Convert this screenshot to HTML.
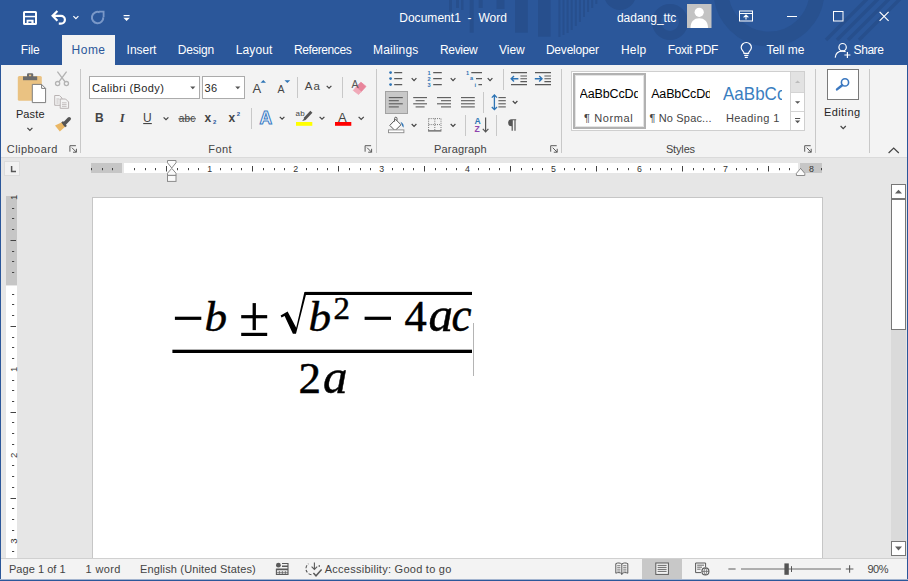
<!DOCTYPE html>
<html>
<head>
<meta charset="utf-8">
<title>Document1 - Word</title>
<style>
html,body{margin:0;padding:0;}
body{width:908px;height:581px;overflow:hidden;position:relative;background:#e6e6e6;font-family:"Liberation Sans",sans-serif;font-size:11px;color:#262626;}
.abs{position:absolute;}
.t{position:absolute;white-space:pre;line-height:1;}
#title{left:0;top:0;width:908px;height:65px;background:#2b579a;}
#hometab{left:62px;top:35px;width:53px;height:31px;background:#f3f3f3;}
#ribbon{left:1px;top:65px;width:906px;height:92px;background:#f3f3f3;}
#ribline{left:1px;top:157px;width:906px;height:1px;background:#dadada;}
#page{left:92px;top:197px;width:729px;height:361px;background:#fff;border:1px solid #c6c6c6;border-bottom:none;}
#status{left:1px;top:559px;width:906px;height:21px;background:#f3f3f3;}
#statline{left:1px;top:558px;width:906px;height:1px;background:#d0d0d0;}
#bl{left:0;top:65px;width:1px;height:516px;background:#2b579a;}
#br{left:907px;top:65px;width:1px;height:516px;background:#2b579a;}
#bb{left:0;top:579px;width:908px;height:2px;background:linear-gradient(#a3b4cf 0,#a3b4cf 50%,#2b579a 50%,#2b579a 100%);}
.sep{position:absolute;width:1px;background:#c8c8c8;}
.box{position:absolute;box-sizing:border-box;background:#fff;border:1px solid #ababab;}
.hr{position:absolute;background:#c6c6c6;}
.hw{position:absolute;background:#fff;}
#overlay{position:absolute;left:0;top:0;width:908px;height:581px;}
.gal{position:absolute;overflow:hidden;white-space:pre;line-height:1;}
</style>
</head>
<body>
<div id="title" class="abs"></div>
<div id="hometab" class="abs"></div>
<div id="ribbon" class="abs"></div>
<div id="ribline" class="abs"></div>

<!-- ribbon group separators -->
<div class="sep" style="left:80px;top:69px;height:84px;"></div>
<div class="sep" style="left:376px;top:69px;height:84px;"></div>
<div class="sep" style="left:561px;top:69px;height:84px;"></div>
<div class="sep" style="left:815px;top:69px;height:84px;"></div>
<div class="sep" style="left:869px;top:69px;height:84px;"></div>
<!-- small separators -->
<div class="sep" style="left:297px;top:77px;height:21px;"></div>
<div class="sep" style="left:342px;top:77px;height:21px;"></div>
<div class="sep" style="left:251px;top:108px;height:21px;"></div>
<div class="sep" style="left:503px;top:69px;height:21px;"></div>
<div class="sep" style="left:483px;top:92px;height:21px;"></div>
<div class="sep" style="left:465px;top:115px;height:21px;"></div>
<div class="sep" style="left:496px;top:115px;height:21px;"></div>

<!-- font boxes -->
<div class="box" style="left:89px;top:76px;width:111px;height:23px;"></div>
<div class="box" style="left:202px;top:76px;width:43px;height:23px;"></div>
<!-- align-left selected -->
<div class="abs" style="left:385px;top:91px;width:23px;height:23px;box-sizing:border-box;background:#c8c8c8;border:1px solid #a2a2a2;"></div>
<!-- styles gallery -->
<div class="box" style="left:571px;top:71px;width:234px;height:60px;border-color:#cfcfcf;"></div>
<div class="abs" style="left:573px;top:73px;width:73px;height:56px;box-sizing:border-box;border:2px solid #b2b2b2;box-shadow:inset 0 0 0 1px #e4e4e4;background:#fff;"></div>
<div class="abs" style="left:790px;top:72px;width:13px;height:20px;background:#e2e2e2;border-left:1px solid #d4d4d4;border-bottom:1px solid #d4d4d4;"></div>
<div class="abs" style="left:790px;top:93px;width:13px;height:18px;background:#fff;border-left:1px solid #d4d4d4;border-bottom:1px solid #d4d4d4;"></div>
<div class="abs" style="left:790px;top:112px;width:13px;height:18px;background:#fff;border-left:1px solid #d4d4d4;"></div>
<div class="gal" style="left:579.6px;top:88px;width:58.6px;height:15px;font-size:12.5px;color:#000;letter-spacing:-0.15px;">AaBbCcDd</div>
<div class="gal" style="left:651.2px;top:88px;width:58.6px;height:15px;font-size:12.5px;color:#000;letter-spacing:-0.15px;">AaBbCcDd</div>
<div class="gal" style="left:723px;top:84.2px;width:65.6px;height:22px;font-size:19px;color:#3a7ebf;transform:scaleX(0.895);transform-origin:0 0;">AaBbCc</div>
<!-- editing button -->
<div class="box" style="left:827px;top:69px;width:32px;height:31px;border-color:#7a7a7a;"></div>

<!-- horizontal ruler -->
<div class="hr" style="left:91px;top:163px;width:31px;height:10px;"></div>
<div class="hw" style="left:124px;top:163px;width:674px;height:10px;"></div>
<div class="hr" style="left:800px;top:163px;width:22px;height:10px;"></div>
<!-- vertical ruler -->
<div class="hr" style="left:6px;top:196px;width:11px;height:89px;"></div>
<div class="hw" style="left:6px;top:286px;width:11px;height:272px;"></div>

<div id="page" class="abs"></div>

<!-- scrollbar -->
<div class="abs" style="left:891px;top:184px;width:15px;height:372px;background:#dadada;"></div>
<div class="box" style="left:891px;top:184px;width:15px;height:15px;border-color:#777;"></div>
<div class="box" style="left:891px;top:199px;width:15px;height:131px;border-color:#777;"></div>
<div class="box" style="left:891px;top:541px;width:15px;height:15px;border-color:#777;"></div>

<div id="statline" class="abs"></div>
<div id="status" class="abs"></div>
<div class="abs" style="left:642px;top:559px;width:40px;height:21px;background:#c8c8c8;"></div>
<div id="bl" class="abs"></div><div id="br" class="abs"></div><div id="bb" class="abs"></div>

<svg class="abs" style="position:absolute;left:0;top:0" width="908" height="581" viewBox="0 0 908 581" font-family="'Liberation Serif', serif" fill="#000">
<rect x="172.4" y="349.7" width="299.6" height="3.3"/>
<rect x="305" y="291.9" width="167" height="3.1"/>
<rect x="174.9" y="316.7" width="26.4" height="3.2"/>
<rect x="364.6" y="316.7" width="26.4" height="3.2"/>
<rect x="241.2" y="315.1" width="26" height="3.2"/>
<rect x="252.6" y="303.1" width="3.3" height="27"/>
<rect x="241.2" y="332.8" width="26" height="3.2"/>
<path d="M280.6,315.4 L287.6,311.6 L296.2,327.8 L304.4,291.9 L306.8,291.9 L306.8,295 L305.9,295 L296,333.7 L292.9,333.7 L284.6,316 L281.5,317.6 Z"/>
<text transform="translate(204.6,331) scale(0.96,0.895)" font-size="47" font-style="italic" stroke="#000" stroke-width="0.5">b</text>
<text transform="translate(308.6,331) scale(0.96,0.895)" font-size="47" font-style="italic" stroke="#000" stroke-width="0.5">b</text>
<text transform="translate(333.4,318.9) scale(1.06,1)" font-size="31" stroke="#000" stroke-width="0.5">2</text>
<text transform="translate(404.4,331) scale(1,1)" font-size="44.5" stroke="#000" stroke-width="0.5">4</text>
<text transform="translate(428.6,331) scale(1.03,1)" font-size="47.5" font-style="italic" stroke="#000" stroke-width="0.5">a</text>
<text transform="translate(451.4,331) scale(0.92,1)" font-size="49" font-style="italic" stroke="#000" stroke-width="0.5">c</text>
<text transform="translate(298.4,393.1) scale(1,1)" font-size="45" stroke="#000" stroke-width="0.5">2</text>
<text transform="translate(323,393.1) scale(1.03,1)" font-size="47.5" font-style="italic" stroke="#000" stroke-width="0.5">a</text>
<rect x="473" y="323" width="1" height="53" fill="#b4b4b4"/>
</svg>
<svg id="overlay" width="908" height="581" viewBox="0 0 908 581" font-family="'Liberation Sans', sans-serif">
<g fill="#274f8d">
<rect x="449" y="0" width="3" height="12"/>
<rect x="456" y="0" width="3" height="8"/>
<rect x="461" y="0" width="2.5" height="10"/>
<rect x="469.7" y="0" width="4" height="32.7"/>
<rect x="478.7" y="0" width="4" height="8"/>
<rect x="496.5" y="0" width="8" height="9"/>
<rect x="515" y="0" width="12.8" height="32.7"/>
<rect x="538" y="0" width="12.6" height="36.7"/>
<rect x="558.4" y="0" width="2" height="37"/>
<rect x="562.5" y="0" width="2" height="35"/>
<rect x="566.6" y="0" width="2" height="33"/>
<rect x="570.7" y="0" width="2" height="30"/>
<rect x="574.8" y="0" width="2" height="26"/>
<rect x="578.9" y="0" width="2" height="22"/>
<rect x="583" y="0" width="2" height="17"/>
<rect x="587.1" y="0" width="2" height="12"/>
<rect x="591.2" y="0" width="2" height="8"/>
<rect x="595.3" y="0" width="2" height="4"/>
<circle cx="620" cy="-6" r="16"/>
</g>
<defs>
<clipPath id="tclip"><rect x="0" y="0" width="908" height="64"/></clipPath>
</defs>
<g fill="none" clip-path="url(#tclip)">
<circle cx="769" cy="-9" r="48" stroke="#28518f" stroke-width="15"/>
<circle cx="670" cy="22" r="13.5" stroke="#274f8d" stroke-width="9"/>
<path d="M826,40 L868,-2" stroke="#274f8d" stroke-width="3.4"/>
<path d="M837,40 L879,-2" stroke="#274f8d" stroke-width="3.4"/>
<path d="M848,40 L890,-2" stroke="#274f8d" stroke-width="3.4"/>
<path d="M859,40 L901,-2" stroke="#274f8d" stroke-width="3.4"/>
</g>
<rect x="62" y="35" width="53" height="30" fill="#f3f3f3"/>
<g fill="none" stroke="#fff" stroke-width="2">
<rect x="24" y="12" width="12" height="12" rx="0.6"/>
</g>
<rect x="24.6" y="15.8" width="10.8" height="1.5" fill="#fff"/>
<path d="M26.6,19.8 H33.6 V24.4 H31.4 V21.4 H28.4 V24.4 H26.6 Z" fill="#fff"/>
<path d="M57.4,10.9 L52.6,15.8 L57.4,20.7 M53,15.8 H61 a3.9,3.9 0 0 1 0,7.8 H58.8" fill="none" stroke="#fff" stroke-width="2.2" stroke-linejoin="miter"/>
<path d="M73.4,16.1 L75.9,18.6 L78.4,16.1" fill="none" stroke="#fff" stroke-width="1.2"/>
<path d="M99.6,12.2 A5.7,5.7 0 1 0 103.3,17.2" fill="none" stroke="#7a98c8" stroke-width="2"/>
<path d="M99,11.6 H103.6 V17" fill="none" stroke="#7a98c8" stroke-width="1.8"/>
<rect x="123.6" y="15" width="6" height="1.2" fill="#fff"/><path d="M123.4,17.8 H129.8 L126.6,21 Z" fill="#fff"/>
<rect x="739.5" y="11" width="13" height="10" fill="none" stroke="#fff" stroke-width="1"/>
<path d="M739.5,13.5 H752.5" stroke="#fff" stroke-width="1" />
<path d="M746,19.5 V15.2 M743.6,17.4 L746,15 L748.4,17.4" fill="none" stroke="#fff" stroke-width="1.1"/>
<path d="M787,16.5 H797" stroke="#fff" stroke-width="1"/>
<rect x="833.5" y="11.5" width="9.5" height="9.5" fill="none" stroke="#fff" stroke-width="1"/>
<path d="M879.6,11.8 L888.6,20.8 M888.6,11.8 L879.6,20.8" stroke="#fff" stroke-width="1.2"/>
<rect x="687" y="4" width="24.5" height="24" fill="#c3c3c3"/>
<circle cx="699.2" cy="12.3" r="4.6" fill="#fff"/>
<path d="M690.5,28 C690.5,21.5 694,18.2 699.2,18.2 C704.4,18.2 708,21.5 708,28 Z" fill="#fff"/>
<g fill="none" stroke="#fff" stroke-width="1.2">
<path d="M744,53.3 C744,51 741.2,50.6 741.2,47.6 A5,5 0 0 1 751.4,47.6 C751.4,50.6 748.6,51 748.6,53.3 Z"/>
<path d="M744.2,55.3 H748.4 M744.8,57.3 H747.8"/>
</g>
<g fill="none" stroke="#fff" stroke-width="1.2">
<circle cx="842.6" cy="47.2" r="3.7"/>
<path d="M835.2,57.6 C835.6,53 838.6,51.2 842.6,51.2 C843.8,51.2 844.8,51.4 845.6,51.8"/>
<path d="M847.4,52 V58 M844.4,55 H850.4"/>
</g>
<rect x="17.8" y="76" width="24" height="24.7" rx="1.5" fill="#eac282"/>
<rect x="23" y="76.4" width="14.2" height="3.8" fill="#6b6b6b"/>
<rect x="27" y="73.2" width="6.2" height="4.4" rx="1.2" fill="#6b6b6b"/>
<rect x="29" y="74.6" width="2.2" height="1.6" fill="#eac282"/>
<path d="M32.3,84.4 H41.6 L45.6,88.4 V102.6 H32.3 Z" fill="#fff" stroke="#7d7d7d" stroke-width="1"/>
<path d="M41.6,84.4 V88.4 H45.6" fill="none" stroke="#7d7d7d" stroke-width="1"/>
<path d="M27.4,127.9 L29.9,130.4 L32.4,127.9" fill="none" stroke="#444" stroke-width="1.2"/>
<g fill="none" stroke="#b3b3b3" stroke-width="1.3">
<path d="M57.4,71.6 L65.2,82 M66.6,71.6 L58.8,82"/>
<circle cx="57.6" cy="83.6" r="2.1"/><circle cx="66.4" cy="83.6" r="2.1"/>
</g>
<g fill="#f3f3f3" stroke="#b9b3b3" stroke-width="1">
<path d="M54.7,95.5 H59.4 L62,98 V105.3 H54.7 Z"/>
<path d="M60.2,99 H65.6 L68.6,102 V108.3 H60.2 Z"/>
<path d="M56.4,99 H59.4 M56.4,101 H58.6 M56.4,103 H58.6 M62,102.8 H66.6 M62,104.6 H66.6 M62,106.4 H66.6" stroke-width="0.8"/>
</g>
<path d="M55,125.6 L62,122.2 L65.4,126.6 L59.8,131.6 Z" fill="#eab765"/>
<path d="M62.2,121.8 L66,126.6" stroke="#555" stroke-width="2.2"/>
<path d="M64.6,123.6 L69.2,118.8" stroke="#555" stroke-width="3.6" stroke-linecap="round"/>
<path d="M69.9,151.7 V145.7 H75.9 M71.9,147.7 L76.4,152.2 M76.4,148.8 V152.2 H73" fill="none" stroke="#5a5a5a" stroke-width="1"/>
<path d="M365.1,151.7 V145.7 H371.1 M367.1,147.7 L371.6,152.2 M371.6,148.8 V152.2 H368.2" fill="none" stroke="#5a5a5a" stroke-width="1"/>
<path d="M550.7,151.7 V145.7 H556.7 M552.7,147.7 L557.2,152.2 M557.2,148.8 V152.2 H553.8" fill="none" stroke="#5a5a5a" stroke-width="1"/>
<path d="M804.7,151.7 V145.7 H810.7 M806.7,147.7 L811.2,152.2 M811.2,148.8 V152.2 H807.8" fill="none" stroke="#5a5a5a" stroke-width="1"/>
<path d="M190.2,86.4 H195.4 L192.8,89.2 Z M235.2,86.4 H240.4 L237.8,89.2 Z" fill="#555"/>
<path d="M260.6,82.8 H266 L263.3,80 Z" fill="#2e74b5"/>
<path d="M284.5,80.2 H290.2 L287.35,83 Z" fill="#2e74b5"/>
<path d="M326.7,85.9 L329.05,88.25 L331.4,85.9" fill="none" stroke="#444" stroke-width="1.2"/>
<path d="M163.6,117.3 L166,119.7 L168.4,117.3" fill="none" stroke="#444" stroke-width="1.2"/>
<rect x="143.2" y="123" width="8.6" height="1.1" fill="#444"/>
<rect x="178.4" y="118.3" width="17.6" height="1" fill="#444"/>
<path d="M360.9,82.2 L366,86.4 L361.2,91.7 L355.9,87.5 Z" fill="#e8849a" stroke="#e8849a" stroke-width="0.8" stroke-linejoin="round"/>
<path d="M355.9,87.5 L361.2,91.7 L358.6,94.5 L353.2,90.4 Z" fill="#f0a9b8" stroke="#f0a9b8" stroke-width="0.8" stroke-linejoin="round"/>
<text x="259.4" y="123.7" font-size="18" font-weight="bold" fill="#fff" stroke="#3d7ec6" stroke-width="1.1" textLength="12.6" lengthAdjust="spacingAndGlyphs">A</text>
<path d="M279.8,116.8 L282.1,119.1 L284.4,116.8" fill="none" stroke="#444" stroke-width="1.2"/>
<path d="M311.4,111.8 L304.6,119" stroke="#555" stroke-width="2.8"/>
<path d="M304.9,117.6 L302.2,121 L305.8,120" fill="#555"/>
<rect x="296" y="122" width="16.3" height="3.8" fill="#ffff00"/>
<path d="M319.6,116.8 L322,119.2 L324.4,116.8" fill="none" stroke="#444" stroke-width="1.2"/>
<rect x="335" y="122" width="16.3" height="3.8" fill="#ff0000"/>
<path d="M358.6,116.8 L361.2,119.4 L363.8,116.8" fill="none" stroke="#444" stroke-width="1.2"/>
<g stroke="#5a5a5a" stroke-width="1.1" fill="none">
<path d="M394.2,72.6 H402.2 M433.2,72.6 H441.8"/>
<path d="M394.2,78.6 H402.2 M433.2,78.6 H441.8"/>
<path d="M394.2,84.6 H402.2 M433.2,84.6 H441.8"/>
<path d="M471.3,72.6 H482 M476,78.6 H482 M478.4,84.6 H482"/>
<path d="M511,72.6 H527 M520.4,76 H527 M520.4,78.8 H527 M520.4,81.6 H527 M511,84.6 H527"/>
<path d="M535,72.6 H551 M544.4,76 H551 M544.4,78.8 H551 M544.4,81.6 H551 M535,84.6 H551"/>
<path d="M388.8,97.6 H402.8"/>
<path d="M413.2,97.6 H427"/>
<path d="M437,97.6 H451"/>
<path d="M461,97.6 H474.8"/>
<path d="M498.4,97.6 H505.8"/>
<path d="M388.8,100.7 H398.8"/>
<path d="M415.6,100.7 H424.6"/>
<path d="M441,100.7 H451"/>
<path d="M461,100.7 H474.8"/>
<path d="M498.4,100.7 H505.8"/>
<path d="M388.8,103.8 H402.8"/>
<path d="M413.2,103.8 H427"/>
<path d="M437,103.8 H451"/>
<path d="M461,103.8 H474.8"/>
<path d="M498.4,103.8 H505.8"/>
<path d="M388.8,106.9 H398.8"/>
<path d="M415.6,106.9 H424.6"/>
<path d="M441,106.9 H451"/>
<path d="M461,106.9 H474.8"/>
<path d="M498.4,106.9 H505.8"/>
</g>
<circle cx="390.6" cy="72.6" r="1.4" fill="#2e74b5"/>
<circle cx="390.6" cy="78.6" r="1.4" fill="#2e74b5"/>
<circle cx="390.6" cy="84.6" r="1.4" fill="#2e74b5"/>
<text x="427.6" y="74.6" font-size="5.6" font-weight="bold" fill="#2e74b5">1</text>
<text x="427.6" y="80.6" font-size="5.6" font-weight="bold" fill="#2e74b5">2</text>
<text x="427.6" y="86.6" font-size="5.6" font-weight="bold" fill="#2e74b5">3</text>
<text x="466" y="74.6" font-size="5.6" font-weight="bold" fill="#2e74b5">1</text>
<text x="470" y="80.4" font-size="5.6" font-weight="bold" fill="#2e74b5">a</text>
<text x="474.6" y="86.6" font-size="5.6" font-weight="bold" fill="#2e74b5">i</text>
<path d="M411.7,78.2 L414.05,80.55 L416.4,78.2" fill="none" stroke="#444" stroke-width="1.2"/>
<path d="M450.7,78.2 L453.05,80.55 L455.4,78.2" fill="none" stroke="#444" stroke-width="1.2"/>
<path d="M487.7,78.2 L490.05,80.55 L492.4,78.2" fill="none" stroke="#444" stroke-width="1.2"/>
<path d="M511.2,78.8 H518.4 M514,76 L511.2,78.8 L514,81.6" fill="none" stroke="#2e74b5" stroke-width="1.4"/>
<path d="M534.8,78.8 H542 M539.2,76 L542,78.8 L539.2,81.6" fill="none" stroke="#2e74b5" stroke-width="1.4"/>
<path d="M494.4,95 V109.6 M491.8,97.6 L494.4,95 L497,97.6 M491.8,107 L494.4,109.6 L497,107" fill="none" stroke="#2e74b5" stroke-width="1.3"/>
<path d="M512.8,101 L515.1,103.3 L517.4,101" fill="none" stroke="#444" stroke-width="1.2"/>
<path d="M389.8,125.4 L395.6,119.4 L401,124.8 L395,130.6 Z" fill="#fff" stroke="#5a5a5a" stroke-width="1"/>
<path d="M394.6,121.6 V118.4 a1.2,1.2 0 0 1 2.4,0 V120.6" fill="none" stroke="#5a5a5a" stroke-width="1"/>
<path d="M400.6,121.8 C403.4,123 404.2,125.6 403.4,127.8 C402.2,126 401.6,124.6 400.6,121.8 Z" fill="#2e74b5"/>
<rect x="388.5" y="129.9" width="15.4" height="2.8" fill="#fff" stroke="#8a8a8a" stroke-width="0.9"/>
<path d="M411.7,124 L414.05,126.35 L416.4,124" fill="none" stroke="#444" stroke-width="1.2"/>
<g stroke="#777" stroke-width="1" stroke-dasharray="1,1.1" fill="none">
<path d="M428.6,118.6 H441 M428.6,124.6 H441 M428.6,118.6 V130.4 M434.8,118.6 V130.4 M441,118.6 V130.4"/>
</g>
<path d="M428,130.9 H441.4" stroke="#444" stroke-width="1.1"/>
<path d="M450.7,124 L453.05,126.35 L455.4,124" fill="none" stroke="#444" stroke-width="1.2"/>
<text x="474.4" y="124" font-size="8.6" font-weight="bold" fill="#2e74b5">A</text>
<text x="474.6" y="132.2" font-size="8.6" font-weight="bold" fill="#8e44ad">Z</text>
<path d="M485.6,117.6 V131.6 M482.8,128.8 L485.6,131.8 L488.4,128.8" fill="none" stroke="#555" stroke-width="1.2"/>
<path d="M511.6,119.2 H516.2 V120.3 H515.6 V130.8 H514.4 V120.3 H512.8 V130.8 H511.6 V126.2 A3.5,3.5 0 0 1 511.6,119.2 Z" fill="#555"/>
<path d="M795,83 H800.2 L797.6,80.4 Z" fill="#bcbcbc"/>
<path d="M795,101.2 H800.2 L797.6,103.8 Z" fill="#555"/>
<path d="M795,118 H800.2 V119 H795 Z M795,120.6 H800.2 L797.6,123.2 Z" fill="#555"/>
<circle cx="845" cy="82.4" r="3.6" fill="none" stroke="#3b78c0" stroke-width="1.6"/>
<path d="M842.2,85.2 L837,89.4" stroke="#3b78c0" stroke-width="2.4" stroke-linecap="round"/>
<path d="M840.6,126 L843.2,128.6 L845.8,126" fill="none" stroke="#444" stroke-width="1.2"/>
<path d="M888.6,153 L893.7,148 L898.8,153" fill="none" stroke="#444" stroke-width="1.2"/>
<rect x="4.5" y="161.5" width="15" height="14" fill="#f1f1f1" stroke="#dcdcdc" stroke-width="1"/>
<path d="M11.6,166 V171.4 H16" fill="none" stroke="#555" stroke-width="1.5"/>
<g fill="#444">
<rect x="91" y="168" width="1" height="2.2"/>
<rect x="102" y="168" width="1" height="2.2"/>
<rect x="112" y="168" width="1" height="2.2"/>
<rect x="134" y="168" width="1" height="2.2"/>
<rect x="145" y="168" width="1" height="2.2"/>
<rect x="155" y="168" width="1" height="2.2"/>
<rect x="166" y="166" width="1" height="5.5"/>
<rect x="177" y="168" width="1" height="2.2"/>
<rect x="188" y="168" width="1" height="2.2"/>
<rect x="198" y="168" width="1" height="2.2"/>
<text x="209.66" y="171.8" font-size="8.8" text-anchor="middle" fill="#333">1</text>
<rect x="220" y="168" width="1" height="2.2"/>
<rect x="231" y="168" width="1" height="2.2"/>
<rect x="241" y="168" width="1" height="2.2"/>
<rect x="252" y="166" width="1" height="5.5"/>
<rect x="263" y="168" width="1" height="2.2"/>
<rect x="274" y="168" width="1" height="2.2"/>
<rect x="284" y="168" width="1" height="2.2"/>
<text x="295.62" y="171.8" font-size="8.8" text-anchor="middle" fill="#333">2</text>
<rect x="306" y="168" width="1" height="2.2"/>
<rect x="317" y="168" width="1" height="2.2"/>
<rect x="327" y="168" width="1" height="2.2"/>
<rect x="338" y="166" width="1" height="5.5"/>
<rect x="349" y="168" width="1" height="2.2"/>
<rect x="360" y="168" width="1" height="2.2"/>
<rect x="370" y="168" width="1" height="2.2"/>
<text x="381.58" y="171.8" font-size="8.8" text-anchor="middle" fill="#333">3</text>
<rect x="392" y="168" width="1" height="2.2"/>
<rect x="403" y="168" width="1" height="2.2"/>
<rect x="413" y="168" width="1" height="2.2"/>
<rect x="424" y="166" width="1" height="5.5"/>
<rect x="435" y="168" width="1" height="2.2"/>
<rect x="446" y="168" width="1" height="2.2"/>
<rect x="456" y="168" width="1" height="2.2"/>
<text x="467.54" y="171.8" font-size="8.8" text-anchor="middle" fill="#333">4</text>
<rect x="478" y="168" width="1" height="2.2"/>
<rect x="489" y="168" width="1" height="2.2"/>
<rect x="499" y="168" width="1" height="2.2"/>
<rect x="510" y="166" width="1" height="5.5"/>
<rect x="521" y="168" width="1" height="2.2"/>
<rect x="532" y="168" width="1" height="2.2"/>
<rect x="542" y="168" width="1" height="2.2"/>
<text x="553.5" y="171.8" font-size="8.8" text-anchor="middle" fill="#333">5</text>
<rect x="564" y="168" width="1" height="2.2"/>
<rect x="574" y="168" width="1" height="2.2"/>
<rect x="585" y="168" width="1" height="2.2"/>
<rect x="596" y="166" width="1" height="5.5"/>
<rect x="607" y="168" width="1" height="2.2"/>
<rect x="617" y="168" width="1" height="2.2"/>
<rect x="628" y="168" width="1" height="2.2"/>
<text x="639.46" y="171.8" font-size="8.8" text-anchor="middle" fill="#333">6</text>
<rect x="650" y="168" width="1" height="2.2"/>
<rect x="660" y="168" width="1" height="2.2"/>
<rect x="671" y="168" width="1" height="2.2"/>
<rect x="682" y="166" width="1" height="5.5"/>
<rect x="693" y="168" width="1" height="2.2"/>
<rect x="703" y="168" width="1" height="2.2"/>
<rect x="714" y="168" width="1" height="2.2"/>
<text x="725.42" y="171.8" font-size="8.8" text-anchor="middle" fill="#333">7</text>
<rect x="736" y="168" width="1" height="2.2"/>
<rect x="746" y="168" width="1" height="2.2"/>
<rect x="757" y="168" width="1" height="2.2"/>
<rect x="768" y="166" width="1" height="5.5"/>
<rect x="779" y="168" width="1" height="2.2"/>
<rect x="789" y="168" width="1" height="2.2"/>
<rect x="800" y="168" width="1" height="2.2"/>
<text x="811.38" y="171.8" font-size="8.8" text-anchor="middle" fill="#333">8</text>
<rect x="821" y="168" width="1" height="2.2"/>
<text transform="translate(16.6,197.34) rotate(-90)" font-size="9.6" text-anchor="middle" fill="#333">1</text>
<rect x="12" y="208" width="2.2" height="1"/>
<rect x="12" y="218" width="2.2" height="1"/>
<rect x="12" y="229" width="2.2" height="1"/>
<rect x="10.5" y="240" width="5.5" height="1"/>
<rect x="12" y="251" width="2.2" height="1"/>
<rect x="12" y="261" width="2.2" height="1"/>
<rect x="12" y="272" width="2.2" height="1"/>
<rect x="12" y="294" width="2.2" height="1"/>
<rect x="12" y="304" width="2.2" height="1"/>
<rect x="12" y="315" width="2.2" height="1"/>
<rect x="10.5" y="326" width="5.5" height="1"/>
<rect x="12" y="337" width="2.2" height="1"/>
<rect x="12" y="347" width="2.2" height="1"/>
<rect x="12" y="358" width="2.2" height="1"/>
<text transform="translate(16.6,369.26) rotate(-90)" font-size="9.6" text-anchor="middle" fill="#333">1</text>
<rect x="12" y="380" width="2.2" height="1"/>
<rect x="12" y="390" width="2.2" height="1"/>
<rect x="12" y="401" width="2.2" height="1"/>
<rect x="10.5" y="412" width="5.5" height="1"/>
<rect x="12" y="422" width="2.2" height="1"/>
<rect x="12" y="433" width="2.2" height="1"/>
<rect x="12" y="444" width="2.2" height="1"/>
<text transform="translate(16.6,455.22) rotate(-90)" font-size="9.6" text-anchor="middle" fill="#333">2</text>
<rect x="12" y="465" width="2.2" height="1"/>
<rect x="12" y="476" width="2.2" height="1"/>
<rect x="12" y="487" width="2.2" height="1"/>
<rect x="10.5" y="498" width="5.5" height="1"/>
<rect x="12" y="508" width="2.2" height="1"/>
<rect x="12" y="519" width="2.2" height="1"/>
<rect x="12" y="530" width="2.2" height="1"/>
<text transform="translate(16.6,541.18) rotate(-90)" font-size="9.6" text-anchor="middle" fill="#333">3</text>
<rect x="12" y="551" width="2.2" height="1"/>
</g>
<g fill="#fbfbfb" stroke="#8a8a8a" stroke-width="1">
<path d="M167.5,160.5 H176 V162.8 L171.75,168 L167.5,162.8 Z"/>
<path d="M167.5,175.4 V173.2 L171.75,168.4 L176,173.2 V175.4 Z"/>
<rect x="167.5" y="175.4" width="8.5" height="6"/>
<path d="M796.4,175.5 V173.4 L800.6,168.4 L804.8,173.4 V175.5 Z"/>
</g>
<path d="M895,193.6 H902 L898.5,189.8 Z" fill="#606060"/>
<path d="M895,546.6 H902 L898.5,550.4 Z" fill="#606060"/>
<circle cx="278.4" cy="565.2" r="2.4" fill="#5a5a5a"/>
<path d="M282,563.5 H288 V574.4 H276.4 V568.8" fill="none" stroke="#5a5a5a" stroke-width="1.1"/>
<path d="M276.4,569.4 H288 M282,566.2 H288" stroke="#5a5a5a" stroke-width="1.6"/>
<path d="M279.4,571 V574 M282.4,571 V574 M285.4,571 V574 M277,572.4 H288" stroke="#5a5a5a" stroke-width="0.7"/>
<path d="M311.4,574.6 A6,6 0 0 1 308.4,563.8" fill="none" stroke="#5a5a5a" stroke-width="1.1" stroke-dasharray="3,1.6"/>
<path d="M314.4,562.4 V569 M311.6,566.6 L314.4,569.4 L317.2,566.6" fill="none" stroke="#5a5a5a" stroke-width="1.1"/>
<path d="M318.6,566 l1.4,0 M319.3,565.3 l0,1.4" stroke="#5a5a5a" stroke-width="1"/>
<path d="M313.4,573 L316,575.8 L321.6,569.6" fill="none" stroke="#5a5a5a" stroke-width="1.5"/>
<path d="M615.8,563.6 C618,562.6 620,562.8 621.8,564 C623.6,562.8 625.6,562.6 627.8,563.6 V573.2 C625.6,572.2 623.6,572.4 621.8,573.6 C620,572.4 618,572.2 615.8,573.2 Z M621.8,564 V573.6" fill="none" stroke="#5a5a5a" stroke-width="1"/>
<path d="M617.2,565.6 H620.4 M617.2,567.4 H620.4 M617.2,569.2 H620.4 M617.2,571 H620.4 M623.2,565.6 H626.4 M623.2,567.4 H626.4 M623.2,569.2 H626.4 M623.2,571 H626.4" stroke="#5a5a5a" stroke-width="0.7"/>
<path d="M621.8,573.6 V575" stroke="#5a5a5a" stroke-width="1"/>
<rect x="655.8" y="563" width="12.6" height="11.4" fill="#f3f3f3" stroke="#5a5a5a" stroke-width="1"/>
<path d="M657.6,565.4 H666.6 M657.6,567.4 H666.6 M657.6,569.4 H666.6 M657.6,571.4 H666.6" stroke="#5a5a5a" stroke-width="0.9"/>
<path d="M705.6,567 V563 H695.6 V572.6 H701" fill="none" stroke="#5a5a5a" stroke-width="1"/>
<path d="M697.2,565.2 H704 M697.2,567.2 H702 M697.2,569.2 H700.6" stroke="#5a5a5a" stroke-width="0.9"/>
<circle cx="705.4" cy="571.4" r="3.5" fill="#f3f3f3" stroke="#5a5a5a" stroke-width="1.1"/>
<path d="M702,571.4 H708.8 M705.4,568 C703.6,570 703.6,572.8 705.4,574.8 M705.4,568 C707.2,570 707.2,572.8 705.4,574.8" fill="none" stroke="#5a5a5a" stroke-width="0.7"/>
<path d="M728.4,569 H735.6 M845.8,569 H853.4 M849.6,565.2 V572.8" stroke="#5a5a5a" stroke-width="1.1"/>
<path d="M741,569 H841" stroke="#6a6a6a" stroke-width="1"/>
<path d="M791.5,566.2 V572" stroke="#555" stroke-width="1"/>
<rect x="784.4" y="563.4" width="4.4" height="11.4" fill="#555"/>
</svg>
<span class="t" style="left:399.20px;top:11.84px;font-size:12px;color:#ffffff;letter-spacing:0.036px;">Document1  -  Word</span>
<span class="t" style="left:616.90px;top:11.84px;font-size:12px;color:#ffffff;letter-spacing:0.001px;">dadang_ttc</span>
<span class="t" style="left:20.70px;top:43.84px;font-size:12px;color:#ffffff;letter-spacing:-0.086px;">File</span>
<span class="t" style="left:71.60px;top:43.84px;font-size:12px;color:#2b579a;letter-spacing:0.471px;">Home</span>
<span class="t" style="left:126.60px;top:43.84px;font-size:12px;color:#ffffff;letter-spacing:-0.036px;">Insert</span>
<span class="t" style="left:177.70px;top:43.84px;font-size:12px;color:#ffffff;letter-spacing:-0.193px;">Design</span>
<span class="t" style="left:235.80px;top:43.84px;font-size:12px;color:#ffffff;letter-spacing:0.111px;">Layout</span>
<span class="t" style="left:294.10px;top:43.84px;font-size:12px;color:#ffffff;letter-spacing:-0.418px;">References</span>
<span class="t" style="left:373.10px;top:43.84px;font-size:12px;color:#ffffff;letter-spacing:0.161px;">Mailings</span>
<span class="t" style="left:440.00px;top:43.84px;font-size:12px;color:#ffffff;letter-spacing:-0.343px;">Review</span>
<span class="t" style="left:499.10px;top:43.84px;font-size:12px;color:#ffffff;letter-spacing:-0.074px;">View</span>
<span class="t" style="left:545.90px;top:43.84px;font-size:12px;color:#ffffff;letter-spacing:-0.200px;">Developer</span>
<span class="t" style="left:621.10px;top:43.84px;font-size:12px;color:#ffffff;letter-spacing:0.103px;">Help</span>
<span class="t" style="left:667.80px;top:43.84px;font-size:12px;color:#ffffff;letter-spacing:-0.338px;">Foxit PDF</span>
<span class="t" style="left:766.40px;top:43.84px;font-size:12px;color:#ffffff;letter-spacing:-0.002px;">Tell me</span>
<span class="t" style="left:853.60px;top:43.84px;font-size:12px;color:#ffffff;letter-spacing:-0.446px;">Share</span>
<span class="t" style="left:15.90px;top:108.69px;font-size:11px;color:#262626;letter-spacing:0.132px;">Paste</span>
<span class="t" style="left:6.80px;top:143.69px;font-size:11px;color:#444444;letter-spacing:0.445px;">Clipboard</span>
<span class="t" style="left:208.20px;top:143.69px;font-size:11px;color:#444444;letter-spacing:0.471px;">Font</span>
<span class="t" style="left:434.10px;top:143.69px;font-size:11px;color:#444444;letter-spacing:0.147px;">Paragraph</span>
<span class="t" style="left:665.90px;top:143.69px;font-size:11px;color:#444444;letter-spacing:-0.145px;">Styles</span>
<span class="t" style="left:823.90px;top:107.19px;font-size:11px;color:#262626;letter-spacing:0.437px;">Editing</span>
<span class="t" style="left:92.10px;top:82.69px;font-size:11px;color:#262626;letter-spacing:0.390px;">Calibri (Body)</span>
<span class="t" style="left:204.40px;top:82.69px;font-size:11px;color:#262626;letter-spacing:0.475px;">36</span>
<span class="t" style="left:94.90px;top:111.84px;font-size:12px;color:#444444;letter-spacing:-0.172px;font-weight:bold;">B</span>
<span class="t" style="left:119.80px;top:111.53px;font-size:12.5px;color:#444444;letter-spacing:2.325px;font-family:'Liberation Serif', serif;font-style:italic;font-weight:bold;">I</span>
<span class="t" style="left:143.00px;top:111.84px;font-size:12px;color:#444444;letter-spacing:0.128px;">U</span>
<span class="t" style="left:178.70px;top:113.53px;font-size:10px;color:#444444;letter-spacing:0.192px;">abc</span>
<span class="t" style="left:204.60px;top:111.84px;font-size:12px;color:#444444;letter-spacing:1.613px;font-weight:bold;">x</span>
<span class="t" style="left:212.90px;top:119.42px;font-size:6px;color:#2b579a;letter-spacing:1.356px;font-weight:bold;">2</span>
<span class="t" style="left:228.40px;top:111.84px;font-size:12px;color:#444444;letter-spacing:1.613px;font-weight:bold;">x</span>
<span class="t" style="left:236.70px;top:110.92px;font-size:6px;color:#2b579a;letter-spacing:1.356px;font-weight:bold;">2</span>
<span class="t" style="left:252.60px;top:82.00px;font-size:13px;color:#444444;letter-spacing:1.828px;">A</span>
<span class="t" style="left:277.40px;top:84.11px;font-size:10.5px;color:#444444;letter-spacing:1.984px;">A</span>
<span class="t" style="left:304.80px;top:80.97px;font-size:11.5px;color:#444444;letter-spacing:0.911px;">Aa</span>
<span class="t" style="left:351.40px;top:78.71px;font-size:10.5px;color:#555555;letter-spacing:0.184px;">A</span>
<span class="t" style="left:295.40px;top:110.43px;font-size:8px;color:#444444;letter-spacing:0.347px;">ab</span>
<span class="t" style="left:337.90px;top:110.50px;font-size:13px;color:#444444;letter-spacing:1.628px;">A</span>
<span class="t" style="left:584.10px;top:112.69px;font-size:11px;color:#444444;letter-spacing:0.597px;">¶ Normal</span>
<span class="t" style="left:649.40px;top:112.69px;font-size:11px;color:#444444;letter-spacing:0.173px;">¶ No Spac...</span>
<span class="t" style="left:725.90px;top:112.69px;font-size:11px;color:#444444;letter-spacing:0.416px;">Heading 1</span>
<span class="t" style="left:9.00px;top:563.89px;font-size:11px;color:#444444;letter-spacing:0.038px;">Page 1 of 1</span>
<span class="t" style="left:85.50px;top:563.89px;font-size:11px;color:#444444;letter-spacing:0.361px;">1 word</span>
<span class="t" style="left:140.00px;top:563.89px;font-size:11px;color:#444444;letter-spacing:0.148px;">English (United States)</span>
<span class="t" style="left:324.70px;top:563.89px;font-size:11px;color:#444444;letter-spacing:0.258px;">Accessibility: Good to go</span>
<span class="t" style="left:867.40px;top:563.89px;font-size:11px;color:#444444;letter-spacing:-0.444px;">90%</span>
</body>
</html>
